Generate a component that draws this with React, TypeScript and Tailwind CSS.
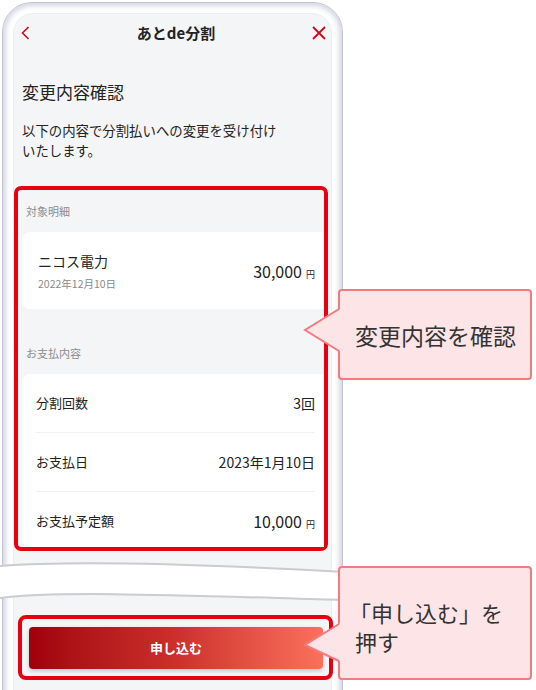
const rows = [
  { label: '分割回数', value: '3回' },
  { label: 'お支払日', value: '2023年1月10日' },
];

function Yen({ amount }: { amount: string }) {
  return (
    <div className="flex items-baseline">
      <span className="text-[16px] leading-[20px]">{amount}</span>
      <span className="ml-[4px] text-[9px] leading-[12px]">円</span>
    </div>
  );
}

export default function App() {
  return (
    <div className="relative h-[690px] w-[536px] overflow-hidden bg-white font-['Noto_Sans_CJK_JP',sans-serif] text-[#222]">
      {/* phone frame */}
      <div className="ml-[2px] mt-[2px] h-[720px] w-[341px] rounded-t-[30px] border border-[#c3c4d3] bg-white p-[10px] shadow-[inset_0_0_5px_3px_#d6d7e3]">
        <div className="h-full rounded-t-[20px] border border-[#eceef2] bg-[#f4f5f7]">
          <header className="flex h-[37px] items-center pl-[7px] pr-[5px]">
            <svg width="9" height="14" viewBox="0 0 9 14" fill="none">
              <path d="M7.5 1L1.5 7l6 6" stroke="#cc0a1a" strokeWidth="1.6" />
            </svg>
            <h1 className="flex-1 pl-[10px] text-center text-[15px] font-bold leading-[20px]">あとde分割</h1>
            <svg width="14" height="14" viewBox="0 0 14 14" fill="none">
              <path d="M1 1l12 12M13 1L1 13" stroke="#cc0a1a" strokeWidth="1.8" />
            </svg>
          </header>

          <h2 className="mt-[30px] px-[8px] text-[17px] leading-[22px]">変更内容確認</h2>
          <p className="mt-[17px] px-[8px] text-[13.4px] leading-[20px]">
            以下の内容で分割払いへの変更を受け付け
            <br />
            いたします。
          </p>

          {/* highlighted details */}
          <div className="mt-[26px] w-[314px] rounded-[7px] border-4 border-[#e60012]">
            <div className="flex h-[42px] items-center pl-[8px] text-[11px] leading-[16px] text-[#8c8c8c]">対象明細</div>
            <div className="ml-[4px] flex h-[77px] items-center justify-between rounded-l-[8px] bg-white pl-[16px] pr-[9px]">
              <div>
                <div className="text-[14px] leading-[20px]">ニコス電力</div>
                <div className="mt-[6px] text-[10.5px] leading-[14px] text-[#888]">2022年12月10日</div>
              </div>
              <Yen amount="30,000" />
            </div>

            <div className="pb-[13px] pl-[8px] pt-[36px] text-[11px] leading-[16px] text-[#8c8c8c]">お支払内容</div>
            <div className="ml-[4px] rounded-l-[8px] bg-white pl-[14px] pr-[9px]">
              {rows.map((r) => (
                <div key={r.label} className="flex h-[59px] items-center justify-between border-b border-[#f1f1f3]">
                  <span className="text-[13px]">{r.label}</span>
                  <span className="text-[14px]">{r.value}</span>
                </div>
              ))}
              <div className="flex h-[55px] items-center justify-between pt-[3px]">
                <span className="text-[13px]">お支払予定額</span>
                <Yen amount="10,000" />
              </div>
            </div>
          </div>

          {/* submit button */}
          <div className="ml-[4px] mt-[64px] w-[315px] rounded-[8px] border-4 border-[#e60012] pb-[7px] pl-[7px] pr-[6px] pt-[8px]">
            <button className="flex h-[42px] w-full items-center justify-center rounded-[4px] bg-linear-to-r from-[#a0000c] via-[#cc2f2c] to-[#fa705c] text-[13px] font-bold text-white shadow-[0_2px_4px_rgba(0,0,0,0.2)]">
              申し込む
            </button>
          </div>
        </div>
      </div>

      {/* break in the phone */}
      <svg className="absolute left-0 top-[555px]" width="346" height="50" viewBox="0 0 346 50">
        <path d="M0 11C80 5 200 9 346 17L346 45C200 41 60 35 0 43Z" fill="#fff" />
        <path d="M0 11C80 5 200 9 346 17" stroke="#cbcbd0" strokeWidth="2" fill="none" />
        <path d="M0 43C60 35 200 41 346 45" stroke="#cbcbd0" strokeWidth="2" fill="none" />
      </svg>

      {/* callouts */}
      <div className="absolute left-[338px] top-[289px] flex h-[91px] w-[194px] items-center rounded-[4px] border-2 border-[#f27b80] bg-[#fde4e6] pl-[15px]">
        <svg className="absolute left-[-37px] top-[16px]" width="40" height="46" viewBox="0 0 40 46">
          <path d="M39 1L2 23L39 45Z" fill="#fde4e6" />
          <path d="M36 2L2 23L36 44" stroke="#f27b80" strokeWidth="2" fill="none" />
        </svg>
        <span className="relative text-[23px] leading-[30px] text-[#333]">変更内容を確認</span>
      </div>

      <div className="absolute left-[338px] top-[566px] flex h-[114px] w-[194px] items-center rounded-[4px] border-2 border-[#f27b80] bg-[#fde4e6] pl-[9px] pt-[8px]">
        <svg className="absolute left-[-37px] top-[53px]" width="40" height="42" viewBox="0 0 40 42">
          <path d="M39 1L2 24L39 41Z" fill="#fde4e6" />
          <path d="M36 3L2 24L36 40" stroke="#f27b80" strokeWidth="2" fill="none" />
        </svg>
        <div className="relative text-[22px] leading-[29px] text-[#333]">
          <div>「申し込む」を</div>
          <div className="pl-[6px]">押す</div>
        </div>
      </div>
    </div>
  );
}
